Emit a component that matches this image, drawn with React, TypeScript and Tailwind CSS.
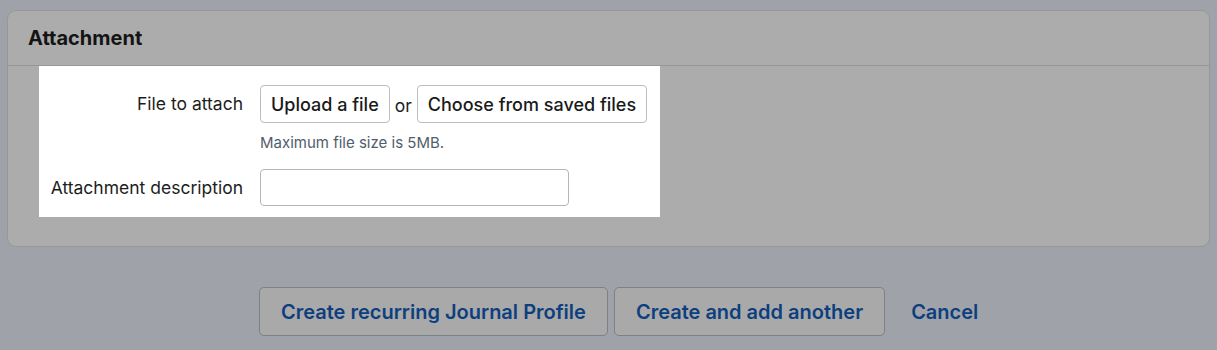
const FONT = { fontFamily: "Inter, 'Noto Sans', sans-serif" };

const FormRow = ({ label, children }: { label: string; children: React.ReactNode }) => (
    <div className="flex items-start">
        <label className="w-[205px] shrink-0 pr-[1px] text-right text-[17.5px] leading-[38px] text-[#1d1d1d]">{label}</label>
        <div className="ml-[16px] flex flex-col">{children}</div>
    </div>
);

const App = () => {
    return (
        <div className="min-h-[350px] w-full bg-[#9fa3a9] px-[7px] pt-[10px]" style={FONT}>
            {/* attachment card */}
            <section className="rounded-[9px] border border-[#979797] bg-[#acacac]">
                <header className="flex h-[55px] items-center border-b border-[#979797] px-[20px]">
                    <h3 className="text-[20px] font-bold text-[#141414]">Attachment</h3>
                </header>
                <div className="pb-[29px] pl-[31px]">
                    <div className="flex w-[621px] flex-col gap-[16px] bg-white pb-[10px] pt-[19px]">
                        <FormRow label="File to attach">
                            <div className="flex items-center">
                                <button className="h-[38px] rounded-[4px] border border-[#bdbdbd] bg-white px-[10px] text-[18px] font-medium text-[#1a1a1a]">
                                    Upload a file
                                </button>
                                <span className="mx-[5px] mt-[4px] text-[17.5px] text-[#1d1d1d]">or</span>
                                <button className="h-[38px] rounded-[4px] border border-[#bdbdbd] bg-white px-[10px] text-[18px] font-medium text-[#1a1a1a]">
                                    Choose from saved files
                                </button>
                            </div>
                            <p className="mt-[10px] text-[15px] leading-[20px] text-[#4f5e6b]">Maximum file size is 5MB.</p>
                        </FormRow>
                        <FormRow label="Attachment description">
                            <input type="text" className="h-[37px] w-[309px] rounded-[4px] border border-[#b5b5b5] bg-white px-2 text-[16px]" />
                        </FormRow>
                    </div>
                </div>
            </section>

            {/* form actions */}
            <div className="flex items-center pl-[252px] pt-[40px]">
                <button className="h-[49px] rounded-[5px] border border-[#7d8186] bg-[#a9a9a9] px-[21px] text-[20px] font-semibold text-[#0d3f7f]">
                    Create recurring Journal Profile
                </button>
                <button className="ml-[6px] h-[49px] rounded-[5px] border border-[#7d8186] bg-[#a9a9a9] px-[21px] text-[20px] font-semibold text-[#0d3f7f]">
                    Create and add another
                </button>
                <a href="#" className="ml-[26px] text-[20px] font-semibold text-[#0d3f7f]">Cancel</a>
            </div>
        </div>
    );
};

export default App;
